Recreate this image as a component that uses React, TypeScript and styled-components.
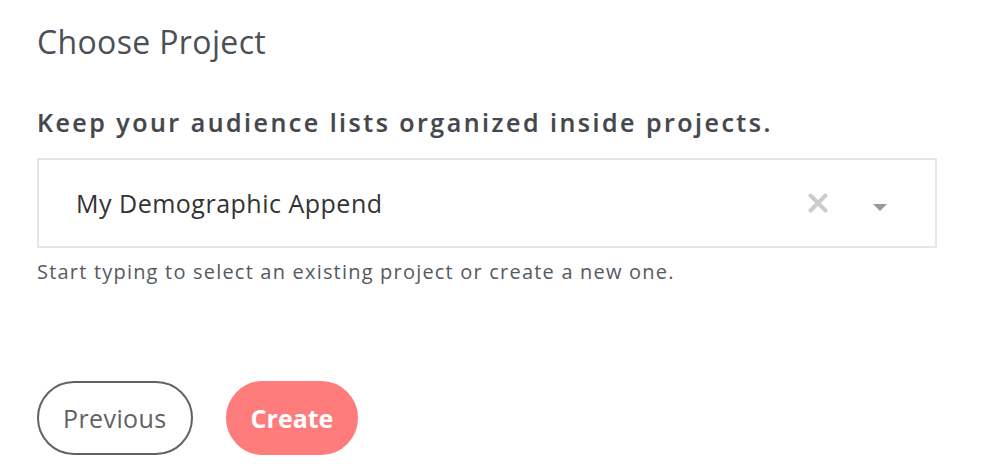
import styled, { createGlobalStyle } from "styled-components";

const Global = createGlobalStyle`
  body {
    margin: 0;
    background: #fff;
    font-family: "Open Sans", "Liberation Sans", sans-serif;
  }
`;

const Page = styled.div`
  padding: 24px 37px 0 37px;
  width: 900px;
`;

const Title = styled.h2`
  margin: 0;
  font-size: 32px;
  font-weight: 400;
  letter-spacing: 0.35px;
  color: #4b5056;
  line-height: 36px;
`;

const Lead = styled.h3`
  margin: 47px 0 0;
  font-size: 25px;
  font-weight: 600;
  letter-spacing: 2.5px;
  color: #44484d;
  line-height: 30px;
  -webkit-text-stroke: 0.2px #44484d;
`;

const Select = styled.div`
  margin-top: 21px;
  height: 90px;
  box-sizing: border-box;
  border: 2px solid #e6e6e6;
  display: flex;
  align-items: center;
  padding: 0 48px 0 37px;
`;

const Value = styled.div`
  flex: 1;
  font-size: 25px;
  letter-spacing: 0.5px;
  color: #333;
`;

const Clear = styled.button`
  border: 0;
  background: none;
  padding: 0;
  margin-right: 45px;
  display: flex;
  cursor: pointer;
`;

const Arrow = styled.span`
  width: 0;
  height: 0;
  border-left: 7.5px solid transparent;
  border-right: 7.5px solid transparent;
  border-top: 7px solid #999;
  margin-top: 8px;
`;

const Help = styled.p`
  margin: 10px 0 0;
  font-size: 20px;
  letter-spacing: 1.2px;
  color: #555a60;
  line-height: 28px;
`;

const Actions = styled.div`
  margin-top: 95px;
  display: flex;
  gap: 33px;
`;

const Button = styled.button<{ $primary?: boolean }>`
  height: 74px;
  box-sizing: border-box;
  border-radius: 37px;
  padding: 0 ${(p) => (p.$primary ? 23 : 24)}px;
  font-family: "Open Sans", "Liberation Sans", sans-serif;
  font-size: 25px;
  letter-spacing: ${(p) => (p.$primary ? 0 : 0.4)}px;
  cursor: pointer;
  border: 2px solid ${(p) => (p.$primary ? "#ff7c7c" : "#5f6266")};
  background: ${(p) => (p.$primary ? "#ff7c7c" : "#fff")};
  color: ${(p) => (p.$primary ? "#fff" : "#5f6266")};
  font-weight: ${(p) => (p.$primary ? 700 : 400)};
`;

export default function App() {
  return (
    <>
      <Global />
      <Page>
        <Title>Choose Project</Title>
        <Lead>Keep your audience lists organized inside projects.</Lead>
        <Select>
          <Value>My Demographic Append</Value>
          <Clear aria-label="clear">
            <svg width="20" height="20" viewBox="0 0 20 20">
              <path d="M2.5 2.5L17.5 17.5M17.5 2.5L2.5 17.5" stroke="#ccc" strokeWidth="4" strokeLinecap="round" />
            </svg>
          </Clear>
          <Arrow />
        </Select>
        <Help>Start typing to select an existing project or create a new one.</Help>
        <Actions>
          <Button>Previous</Button>
          <Button $primary>Create</Button>
        </Actions>
      </Page>
    </>
  );
}
